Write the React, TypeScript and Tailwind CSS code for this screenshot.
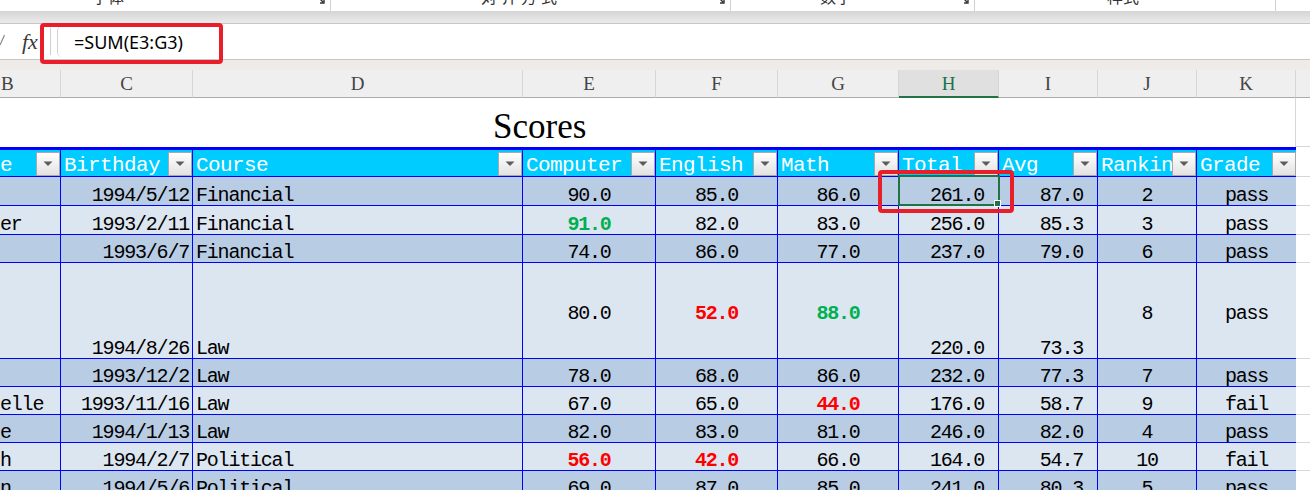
type Row = {
  b: string;
  c: string;
  d: string;
  e: string;
  f: string;
  g: string;
  h: string;
  i: string;
  j: string;
  k: string;
  red?: string[];
  green?: string[];
};

const rows: Row[] = [
  { b: "", c: "1994/5/12", d: "Financial", e: "90.0", f: "85.0", g: "86.0", h: "261.0", i: "87.0", j: "2", k: "pass" },
  { b: "er", c: "1993/2/11", d: "Financial", e: "91.0", f: "82.0", g: "83.0", h: "256.0", i: "85.3", j: "3", k: "pass", green: ["e"] },
  { b: "", c: "1993/6/7", d: "Financial", e: "74.0", f: "86.0", g: "77.0", h: "237.0", i: "79.0", j: "6", k: "pass" },
  { b: "", c: "1994/8/26", d: "Law", e: "80.0", f: "52.0", g: "88.0", h: "220.0", i: "73.3", j: "8", k: "pass", red: ["f"], green: ["g"] },
  { b: "", c: "1993/12/2", d: "Law", e: "78.0", f: "68.0", g: "86.0", h: "232.0", i: "77.3", j: "7", k: "pass" },
  { b: "elle", c: "1993/11/16", d: "Law", e: "67.0", f: "65.0", g: "44.0", h: "176.0", i: "58.7", j: "9", k: "fail", red: ["g"] },
  { b: "e", c: "1994/1/13", d: "Law", e: "82.0", f: "83.0", g: "81.0", h: "246.0", i: "82.0", j: "4", k: "pass" },
  { b: "h", c: "1994/2/7", d: "Political", e: "56.0", f: "42.0", g: "66.0", h: "164.0", i: "54.7", j: "10", k: "fail", red: ["e", "f"] },
  { b: "n", c: "1994/5/6", d: "Political", e: "69.0", f: "87.0", g: "85.0", h: "241.0", i: "80.3", j: "5", k: "pass" },
];

const rowHeights = ["h-[29px]", "h-[29px]", "h-[28px]", "h-[96px]", "h-[28px]", "h-[28px]", "h-[28px]", "h-[28px]", "h-[28px]"];

const cols: { k: keyof Row; w: string; j: string; p: string; letter: string; head: string }[] = [
  { k: "b", w: "w-[61px]", j: "justify-start", p: "", letter: "B", head: "e" },
  { k: "c", w: "w-[132px]", j: "justify-end", p: "pr-[3px]", letter: "C", head: "Birthday" },
  { k: "d", w: "w-[330px]", j: "justify-start", p: "pl-[3px]", letter: "D", head: "Course" },
  { k: "e", w: "w-[133px]", j: "justify-center", p: "", letter: "E", head: "Computer" },
  { k: "f", w: "w-[122px]", j: "justify-center", p: "", letter: "F", head: "English" },
  { k: "g", w: "w-[121px]", j: "justify-center", p: "", letter: "G", head: "Math" },
  { k: "h", w: "w-[100px]", j: "justify-end", p: "pr-[14px]", letter: "H", head: "Total" },
  { k: "i", w: "w-[99px]", j: "justify-end", p: "pr-[14px]", letter: "I", head: "Avg" },
  { k: "j", w: "w-[99px]", j: "justify-center", p: "", letter: "J", head: "Ranking" },
  { k: "k", w: "w-[99px]", j: "justify-center", p: "", letter: "K", head: "Grade" },
];

const midKeys = ["e", "f", "g", "j", "k"];

function FilterBtn() {
  return (
    <div className="w-[24px] h-[24px] shrink-0 border border-[#a8a8a8] bg-linear-to-b from-white to-[#e2e2e2] flex items-center justify-center">
      <svg width="10" height="6" viewBox="0 0 10 6">
        <path d="M0.5 0.5h9L5 5z" fill="#5c5c5c" />
      </svg>
    </div>
  );
}

function Launcher() {
  return (
    <svg width="10" height="10" viewBox="0 0 10 10" className="mt-[-6px]">
      <path d="M1 6V1h5" stroke="#333" strokeWidth="1.2" fill="none" />
      <path d="M3 3l5 5M5 9h4V5" stroke="#333" strokeWidth="1.4" fill="none" />
    </svg>
  );
}

function RibbonGroup({ w, label, ml, last }: { w: string; label: string; ml: string; last?: boolean }) {
  return (
    <div className={`${w} h-full flex items-start border-r border-[#d0d0d0]`}>
      <span className={`${ml} mt-[-12px] text-[16px] leading-[16px] text-[#333] font-['Noto_Sans_CJK_SC',sans-serif] whitespace-nowrap`}>
        {label}
      </span>
      {!last && (
        <div className="ml-auto mr-[5px]">
          <Launcher />
        </div>
      )}
    </div>
  );
}

export default function App() {
  return (
    <div className="relative w-[1310px] h-[490px] overflow-hidden bg-white font-['Liberation_Mono',monospace]">
      {/* ribbon bottom (cut off) */}
      <div className="h-[11px] flex overflow-hidden bg-white">
        <RibbonGroup w="w-[331px]" label="字体" ml="ml-[92px]" />
        <RibbonGroup w="w-[400px]" label="对齐方式" ml="ml-[150px] tracking-[4px]" />
        <RibbonGroup w="w-[244px]" label="数字" ml="ml-[89px]" />
        <RibbonGroup w="w-[301px]" label="样式" ml="ml-[132px]" last />
      </div>
      <div className="h-[12px] bg-linear-to-b from-[#d4d4d4] to-[#ebebeb]" />

      {/* formula bar */}
      <div className="h-[37px] flex border-y border-[#c6c6c6] bg-white">
        <div className="w-[22px] pt-[10px]">
          <svg width="6" height="12" viewBox="0 0 6 12">
            <path d="M0 11L4.5 1" stroke="#8a8a8a" strokeWidth="1.2" fill="none" />
          </svg>
        </div>
        <div className="w-[28px] pt-[7px] italic text-[22px] leading-[21px] text-[#3a3a3a] font-['Liberation_Serif',serif]">fx</div>
        <div className="w-px bg-[#cfcfcf] my-[4px]" />
        <div className="flex-1 ml-[6px] my-[2px] border-l border-[#d4d4d4] rounded-l-[5px] pl-[16px] flex items-center">
          <span className="text-[18px] leading-[20px] text-black font-['Noto_Sans',sans-serif]">=SUM(E3:G3)</span>
        </div>
      </div>
      <div className="h-[10px] bg-[#efebe9]" />

      {/* column letters */}
      <div className="h-[28px] flex bg-[#efefef]">
        {cols.map((c) => (
          <div
            key={c.letter}
            className={`${c.w} h-full flex items-center pt-[2px] border-r border-[#d6d6d6] font-['Liberation_Serif',serif] text-[19px] ${
              c.letter === "B" ? "justify-start pl-[1px]" : "justify-center"
            } ${
              c.letter === "H"
                ? "bg-[#e0e0e0] text-[#217346] border-b-2 border-b-[#217346]"
                : "text-[#444] border-b border-b-[#ababab]"
            }`}
          >
            {c.letter}
          </div>
        ))}
        <div className="flex-1 h-full border-b border-[#ababab]" />
      </div>

      {/* title row */}
      <div className="h-[49px] flex">
        <div className="w-[1296px] border-r border-[#d6d6d6] flex items-end pl-[493px] pb-[3px]">
          <span className="text-[35px] leading-[35px] text-black font-['Liberation_Serif',serif]">Scores</span>
        </div>
        <div className="flex-1 border-b border-[#d6d6d6]" />
      </div>
      <div className="h-[3px] flex">
        <div className="w-[1296px] bg-[#0000ff]" />
        <div className="flex-1" />
      </div>

      {/* header row */}
      <div className="h-[27px] flex">
        {cols.map((c, idx) => (
          <div
            key={c.head}
            className={`${c.w} h-full flex items-end bg-[#00ccff] border-b border-[#0000ff] ${
              idx < cols.length - 1 ? "border-r" : ""
            }`}
          >
            <span
              className={`flex-1 min-w-0 overflow-hidden whitespace-nowrap ${
                idx === 0 ? "pl-0" : "pl-[3px]"
              } text-white text-[21px] leading-[20px] tracking-[-0.6px]`}
            >
              {c.head}
            </span>
            <FilterBtn />
          </div>
        ))}
        <div className="flex-1 h-full border-b border-[#d6d6d6]" />
      </div>

      {/* data rows */}
      {rows.map((r, ri) => (
        <div key={ri} className={`${rowHeights[ri]} flex`}>
          {cols.map((c, idx) => {
            const red = r.red?.includes(c.k as string);
            const green = r.green?.includes(c.k as string);
            const mid = ri === 3 && midKeys.includes(c.k as string);
            return (
              <div
                key={c.letter}
                className={`${c.w} h-full flex ${c.j} ${c.p} ${mid ? "items-center pt-[6px]" : "items-end"} ${
                  ri % 2 === 0 ? "bg-[#b8cce4]" : "bg-[#dce6f1]"
                } border-b border-[#0000ff] ${idx < cols.length - 1 ? "border-r" : ""} overflow-hidden`}
              >
                <span
                  className={`whitespace-nowrap text-[20px] leading-[18px] tracking-[-1.2px] ${
                    red ? "text-[#ff0000] font-bold" : green ? "text-[#00b050] font-bold" : "text-black"
                  }`}
                >
                  {r[c.k] as string}
                </span>
              </div>
            );
          })}
          <div className="flex-1 h-full border-b border-[#d6d6d6]" />
        </div>
      ))}

      {/* selection on H3 */}
      <div className="absolute left-[898px] top-[175px] w-[102px] h-[31px] border-2 border-[#217346] pointer-events-none" />
      <div className="absolute left-[994px] top-[200px] w-[7px] h-[7px] bg-[#217346] border border-white pointer-events-none" />

      {/* red highlight boxes */}
      <div className="absolute left-[40px] top-[23px] w-[183px] h-[41px] border-[4px] border-[#e81f2a] rounded-[4px] pointer-events-none" />
      <div className="absolute left-[878px] top-[170px] w-[136px] h-[43px] border-[4px] border-[#e81f2a] rounded-[4px] pointer-events-none" />
    </div>
  );
}
